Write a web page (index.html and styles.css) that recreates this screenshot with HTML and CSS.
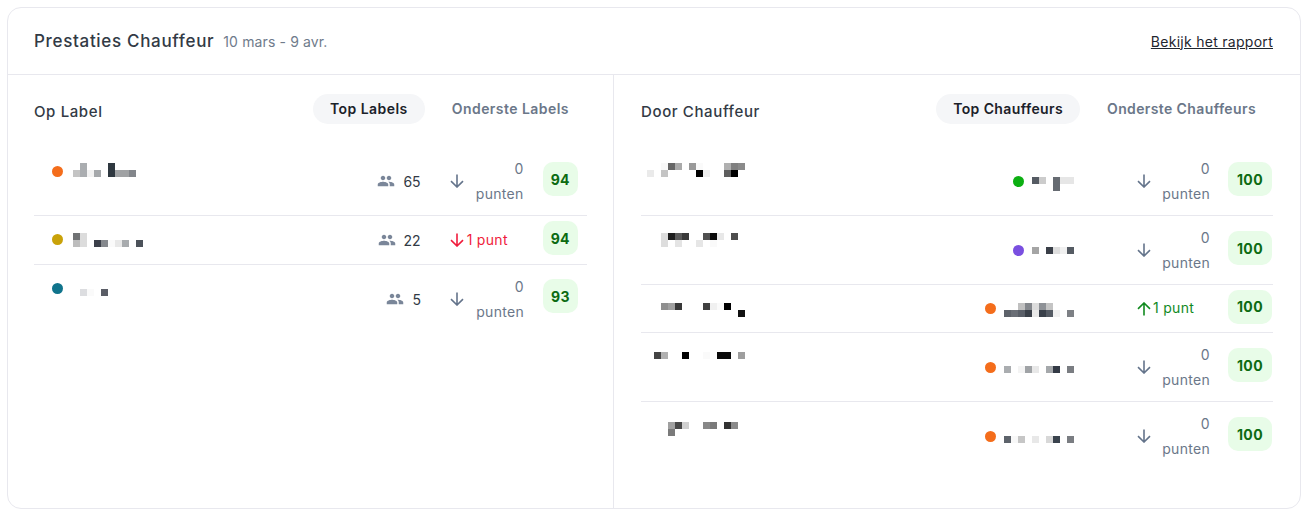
FILE: index.html
```html
<!DOCTYPE html>
<html lang="nl">
<head>
  <meta charset="UTF-8" />
  <meta name="viewport" content="width=device-width, initial-scale=1.0"/>
  <title>Prestaties Chauffeur</title>
  <link rel="stylesheet" href="styles.css">
</head>
<body>

<svg class="sprites" width="0" height="0">
  <symbol id="people" viewBox="0 0 24 24">
    <path d="M16 11c1.66 0 2.99-1.34 2.99-3S17.66 5 16 5c-1.66 0-3 1.34-3 3s1.34 3 3 3zm-8 0c1.66 0 2.99-1.34 2.99-3S9.66 5 8 5C6.34 5 5 6.34 5 8s1.34 3 3 3zm0 2c-2.33 0-7 1.17-7 3.5V19h14v-2.5c0-2.33-4.67-3.5-7-3.5zm8 0c-.29 0-.62.02-.97.05 1.16.84 1.97 1.97 1.97 3.45V19h6v-2.5c0-2.33-4.67-3.5-7-3.5z"/>
  </symbol>
  <symbol id="arrow-down" viewBox="0 0 14 14">
    <path d="M7 .5v12.5M1 7.2 7 13l6-5.8" fill="none" stroke="currentColor" stroke-width="1.6"/>
  </symbol>
  <symbol id="arrow-up" viewBox="0 0 14 14">
    <path d="M7 13.5V1M1 6.8 7 1l6 5.8" fill="none" stroke="currentColor" stroke-width="1.6"/>
  </symbol>
</svg>

<div class="card">
  <div class="card-header">
    <div class="card-title">
      <h1>Prestaties Chauffeur</h1>
      <span class="date-range">10 mars - 9 avr.</span>
    </div>
    <a class="report-link" href="#">Bekijk het rapport</a>
  </div>

  <div class="panels">
    <!-- labels -->
    <section class="panel panel-labels">
      <div class="panel-header">
        <h2>Op Label</h2>
        <div class="tabs">
          <button class="tab tab-active">Top Labels</button>
          <button class="tab">Onderste Labels</button>
        </div>
      </div>

      <div class="row row-tall">
        <span class="dot dot-orange dot-first"></span>
        <svg class="mosaic" width="80" height="68" shape-rendering="crispEdges">
          <rect x="7" y="16" width="7" height="7" fill="#aaadb0"/><rect x="35" y="16" width="7" height="7" fill="#2f3840"/>
          <rect x="0" y="23" width="7" height="7" fill="#c4c4c4"/><rect x="7" y="23" width="7" height="7" fill="#aaadb0"/><rect x="14" y="23" width="7" height="7" fill="#f2f2f2"/><rect x="21" y="23" width="7" height="7" fill="#a5a8ab"/><rect x="35" y="23" width="7" height="7" fill="#2f3840"/><rect x="42" y="23" width="7" height="7" fill="#a0a2a4"/><rect x="49" y="23" width="7" height="7" fill="#a0a2a4"/><rect x="56" y="23" width="7" height="7" fill="#83868b"/>
        </svg>
        <div class="count">
          <svg class="people-icon"><use href="#people"/></svg>
          <span>65</span>
        </div>
        <div class="delta">
          <svg class="arrow"><use href="#arrow-down"/></svg>
          <span class="delta-text">0 punten</span>
        </div>
        <div class="score">94</div>
      </div>

      <div class="row row-short">
        <span class="dot dot-yellow"></span>
        <svg class="mosaic" width="80" height="48" shape-rendering="crispEdges">
          <rect x="0" y="17" width="7" height="7" fill="#707274"/><rect x="7" y="17" width="7" height="7" fill="#dcdcdc"/>
          <rect x="0" y="24" width="7" height="7" fill="#bdbdbd"/><rect x="7" y="24" width="7" height="7" fill="#dcdcdc"/><rect x="21" y="24" width="7" height="7" fill="#3c404a"/><rect x="28" y="24" width="7" height="7" fill="#85888d"/><rect x="35" y="24" width="7" height="7" fill="#fafafa"/><rect x="42" y="24" width="7" height="7" fill="#e8e8e8"/><rect x="49" y="24" width="7" height="7" fill="#a8abae"/><rect x="63" y="24" width="7" height="7" fill="#4c525a"/>
        </svg>
        <div class="count">
          <svg class="people-icon"><use href="#people"/></svg>
          <span>22</span>
        </div>
        <div class="delta delta-down">
          <svg class="arrow"><use href="#arrow-down"/></svg>
          <span class="delta-single">1 punt</span>
        </div>
        <div class="score">94</div>
      </div>

      <div class="row row-tall row-last">
        <span class="dot dot-teal"></span>
        <svg class="mosaic" width="80" height="68" shape-rendering="crispEdges">
          <rect x="7" y="24" width="7" height="7" fill="#dcdde0"/><rect x="14" y="24" width="7" height="7" fill="#fafafa"/><rect x="28" y="24" width="7" height="7" fill="#5a5d66"/>
        </svg>
        <div class="count">
          <svg class="people-icon"><use href="#people"/></svg>
          <span>5</span>
        </div>
        <div class="delta">
          <svg class="arrow"><use href="#arrow-down"/></svg>
          <span class="delta-text">0 punten</span>
        </div>
        <div class="score">93</div>
      </div>
    </section>

    <!-- chauffeurs -->
    <section class="panel panel-drivers">
      <div class="panel-header">
        <h2>Door Chauffeur</h2>
        <div class="tabs">
          <button class="tab tab-active">Top Chauffeurs</button>
          <button class="tab">Onderste Chauffeurs</button>
        </div>
      </div>

      <div class="row row-tall">
        <svg class="mosaic" width="110" height="68" shape-rendering="crispEdges">
          <rect x="20" y="16" width="7" height="7" fill="#f8f8f8"/><rect x="27" y="16" width="7" height="7" fill="#666"/><rect x="34" y="16" width="7" height="7" fill="#aaa"/><rect x="48" y="16" width="7" height="7" fill="#999"/><rect x="55" y="16" width="7" height="7" fill="#fafafa"/><rect x="83" y="16" width="7" height="7" fill="#b0b0b0"/><rect x="90" y="16" width="7" height="7" fill="#808080"/><rect x="97" y="16" width="7" height="7" fill="#8a8a8a"/>
          <rect x="6" y="23" width="7" height="7" fill="#eaeaea"/><rect x="20" y="23" width="7" height="7" fill="#c4c4c4"/><rect x="55" y="23" width="7" height="7" fill="#000"/><rect x="62" y="23" width="7" height="7" fill="#eee"/><rect x="83" y="23" width="7" height="7" fill="#5e5e5e"/><rect x="90" y="23" width="7" height="7" fill="#000"/>
        </svg>
        <div class="driver-label">
          <span class="dot dot-green"></span>
          <svg class="mosaic" width="43" height="68" shape-rendering="crispEdges">
            <rect x="0" y="30" width="7" height="7" fill="#555b63"/><rect x="7" y="30" width="7" height="7" fill="#ccc"/><rect x="21" y="30" width="7" height="7" fill="#666b72"/><rect x="28" y="30" width="7" height="7" fill="#e6e6e6"/><rect x="35" y="30" width="7" height="7" fill="#e6e6e6"/>
            <rect x="21" y="37" width="7" height="7" fill="#666b72"/>
          </svg>
        </div>
        <div class="delta">
          <svg class="arrow"><use href="#arrow-down"/></svg>
          <span class="delta-text">0 punten</span>
        </div>
        <div class="score">100</div>
      </div>

      <div class="row row-tall">
        <svg class="mosaic" width="110" height="68" shape-rendering="crispEdges">
          <rect x="20" y="17" width="7" height="7" fill="#ddd"/><rect x="27" y="17" width="7" height="7" fill="#1e1e1e"/><rect x="34" y="17" width="7" height="7" fill="#5a5a5a"/><rect x="41" y="17" width="7" height="7" fill="#3a3a3a"/><rect x="62" y="17" width="7" height="7" fill="#505050"/><rect x="69" y="17" width="7" height="7" fill="#0a0a0a"/><rect x="76" y="17" width="7" height="7" fill="#e8e8e8"/><rect x="90" y="17" width="7" height="7" fill="#4d4d4d"/>
          <rect x="20" y="24" width="7" height="7" fill="#ddd"/><rect x="34" y="24" width="7" height="7" fill="#e4e4e4"/><rect x="55" y="24" width="7" height="7" fill="#e6e6e6"/><rect x="69" y="24" width="7" height="7" fill="#fafafa"/>
        </svg>
        <div class="driver-label">
          <span class="dot dot-purple"></span>
          <svg class="mosaic" width="43" height="68" shape-rendering="crispEdges">
            <rect x="0" y="31" width="7" height="7" fill="#a5a5a5"/><rect x="14" y="31" width="7" height="7" fill="#3a3f48"/><rect x="21" y="31" width="7" height="7" fill="#dedede"/><rect x="28" y="31" width="7" height="7" fill="#f0f0f0"/><rect x="35" y="31" width="7" height="7" fill="#555b63"/>
          </svg>
        </div>
        <div class="delta">
          <svg class="arrow"><use href="#arrow-down"/></svg>
          <span class="delta-text">0 punten</span>
        </div>
        <div class="score">100</div>
      </div>

      <div class="row row-driver-short">
        <svg class="mosaic" width="110" height="47" shape-rendering="crispEdges">
          <rect x="20" y="18" width="7" height="7" fill="#8f8f8f"/><rect x="27" y="18" width="7" height="7" fill="#a0a0a0"/><rect x="34" y="18" width="7" height="7" fill="#383838"/><rect x="62" y="18" width="7" height="7" fill="#404040"/><rect x="69" y="18" width="7" height="7" fill="#f0f0f0"/><rect x="76" y="18" width="7" height="7" fill="#fafafa"/><rect x="83" y="18" width="7" height="7" fill="#000"/>
          <rect x="97" y="25" width="7" height="7" fill="#111"/>
        </svg>
        <div class="driver-label">
          <span class="dot dot-orange"></span>
          <svg class="mosaic" width="71" height="47" shape-rendering="crispEdges">
            <rect x="14" y="18" width="7" height="7" fill="#c0c0c0"/><rect x="21" y="18" width="7" height="7" fill="#84878c"/><rect x="28" y="18" width="7" height="7" fill="#dcdcdc"/><rect x="35" y="18" width="7" height="7" fill="#8e9196"/><rect x="42" y="18" width="7" height="7" fill="#c4c4c4"/>
            <rect x="0" y="25" width="7" height="7" fill="#5d626a"/><rect x="7" y="25" width="7" height="7" fill="#6a6e76"/><rect x="14" y="25" width="7" height="7" fill="#5a5f68"/><rect x="21" y="25" width="7" height="7" fill="#3a4049"/><rect x="28" y="25" width="7" height="7" fill="#e8e8e8"/><rect x="35" y="25" width="7" height="7" fill="#39404a"/><rect x="42" y="25" width="7" height="7" fill="#555b64"/><rect x="49" y="25" width="7" height="7" fill="#f0f0f0"/><rect x="63" y="25" width="7" height="7" fill="#7d8085"/>
          </svg>
        </div>
        <div class="delta delta-up">
          <svg class="arrow"><use href="#arrow-up"/></svg>
          <span class="delta-single">1 punt</span>
        </div>
        <div class="score">100</div>
      </div>

      <div class="row row-tall">
        <svg class="mosaic" width="110" height="68" shape-rendering="crispEdges">
          <rect x="13" y="19" width="7" height="7" fill="#444"/><rect x="20" y="19" width="7" height="7" fill="#b0b0b0"/><rect x="41" y="19" width="7" height="7" fill="#000"/><rect x="62" y="19" width="7" height="7" fill="#fafafa"/><rect x="76" y="19" width="7" height="7" fill="#0a0a0a"/><rect x="83" y="19" width="7" height="7" fill="#0a0a0a"/><rect x="97" y="19" width="7" height="7" fill="#9e9e9e"/>
        </svg>
        <div class="driver-label">
          <span class="dot dot-orange"></span>
          <svg class="mosaic" width="71" height="68" shape-rendering="crispEdges">
            <rect x="0" y="33" width="7" height="7" fill="#aaadb0"/><rect x="14" y="33" width="7" height="7" fill="#f4f4f4"/><rect x="21" y="33" width="7" height="7" fill="#a0a3a6"/><rect x="28" y="33" width="7" height="7" fill="#e8e8e8"/><rect x="42" y="33" width="7" height="7" fill="#a5a8ab"/><rect x="49" y="33" width="7" height="7" fill="#333a45"/><rect x="63" y="33" width="7" height="7" fill="#7a7d82"/>
          </svg>
        </div>
        <div class="delta">
          <svg class="arrow"><use href="#arrow-down"/></svg>
          <span class="delta-text">0 punten</span>
        </div>
        <div class="score">100</div>
      </div>

      <div class="row row-tall row-last">
        <svg class="mosaic" width="110" height="68" shape-rendering="crispEdges">
          <rect x="27" y="20" width="7" height="7" fill="#a0a0a0"/><rect x="34" y="20" width="7" height="7" fill="#484848"/><rect x="41" y="20" width="7" height="7" fill="#d0d0d0"/><rect x="62" y="20" width="7" height="7" fill="#888"/><rect x="69" y="20" width="7" height="7" fill="#7a7a7a"/><rect x="83" y="20" width="7" height="7" fill="#333"/><rect x="90" y="20" width="7" height="7" fill="#8a8a8a"/>
          <rect x="27" y="27" width="7" height="7" fill="#7a7a7a"/>
        </svg>
        <div class="driver-label">
          <span class="dot dot-orange"></span>
          <svg class="mosaic" width="71" height="68" shape-rendering="crispEdges">
            <rect x="0" y="34" width="7" height="7" fill="#5d636b"/><rect x="7" y="34" width="7" height="7" fill="#f8f8f8"/><rect x="14" y="34" width="7" height="7" fill="#c6c6c6"/><rect x="28" y="34" width="7" height="7" fill="#e8e8e8"/><rect x="42" y="34" width="7" height="7" fill="#d8d8d8"/><rect x="49" y="34" width="7" height="7" fill="#3a434d"/><rect x="63" y="34" width="7" height="7" fill="#7a7d82"/>
          </svg>
        </div>
        <div class="delta">
          <svg class="arrow"><use href="#arrow-down"/></svg>
          <span class="delta-text">0 punten</span>
        </div>
        <div class="score">100</div>
      </div>
    </section>
  </div>
</div>

</body>
</html>
```

FILE: styles.css
```css
* {
  box-sizing: border-box;
}

body {
  margin: 0;
  padding: 7px 5px 7px 7px;
  background-color: #fff;
  font-family: "Inter", "Liberation Sans", sans-serif;
  color: #323a45;
}

.sprites {
  display: block;
  height: 0;
}

.card {
  height: 502px;
  border: 1px solid #e8e8ee;
  border-radius: 14px;
  background-color: #fff;
  display: flex;
  flex-direction: column;
}

.card-header {
  height: 67px;
  padding: 0 27px 0 26px;
  border-bottom: 1px solid #e8e8ee;
  display: flex;
  align-items: center;
  justify-content: space-between;
}

.card-title {
  display: flex;
  align-items: baseline;
  gap: 9px;
}

.card-title h1 {
  margin: 0;
  font-size: 17px;
  font-weight: 500;
  letter-spacing: 0.68px;
  color: #323a45;
}

.date-range {
  font-size: 14px;
  letter-spacing: 0.13px;
  color: #6f7b8b;
}

.report-link {
  font-size: 14px;
  letter-spacing: 0.28px;
  color: #1f2630;
}

.panels {
  flex: 1;
  display: flex;
}

.panel {
  padding-top: 19px;
}

.panel-labels {
  width: 606px;
  padding-left: 26px;
  padding-right: 26px;
  border-right: 1px solid #e8e8ee;
}

.panel-drivers {
  flex: 1;
  padding-left: 27px;
  padding-right: 27px;
}

.panel-header {
  height: 30px;
  margin-bottom: 23px;
  display: flex;
  align-items: center;
  justify-content: space-between;
}

.panel-header h2 {
  margin: 4px 0 0;
  font-size: 15px;
  font-weight: 500;
  letter-spacing: 0.62px;
  color: #323a45;
}

.tabs {
  display: flex;
  gap: 10px;
}

.panel-labels .tabs {
  margin-right: 1px;
}

.tab {
  height: 30px;
  padding: 0 17px 2px;
  border: none;
  border-radius: 15px;
  background: transparent;
  font-family: inherit;
  font-size: 14px;
  font-weight: 600;
  letter-spacing: 0.38px;
  color: #6b7789;
}

.panel-labels .tab {
  letter-spacing: 0.45px;
}

.tab-active {
  background-color: #f5f6f8;
  color: #1b2129;
}

.row {
  display: flex;
  align-items: center;
  border-bottom: 1px solid #e8e8ee;
}

.row-tall {
  height: 69px;
}

.row-short {
  height: 49px;
}

.row-driver-short {
  height: 48px;
}

.row-last {
  height: 68px;
  border-bottom: none;
}

.panel-labels .row {
  padding-right: 9px;
}

.panel-labels .row > .dot {
  align-self: flex-start;
  margin: 18px 10px 0 18px;
}

.panel-labels .row > .dot-first {
  margin-top: 19px;
}

.panel-labels .row > .mosaic {
  margin-right: auto;
}

.panel-drivers .row {
  padding-right: 1px;
}

.panel-drivers .row > .mosaic {
  margin-right: auto;
}

.mosaic {
  display: block;
  align-self: flex-start;
  flex-shrink: 0;
}

.dot {
  display: block;
  width: 11px;
  height: 11px;
  flex-shrink: 0;
  border-radius: 50%;
}

.dot-orange { background-color: #f46d1b; }
.dot-yellow { background-color: #c9a209; }
.dot-teal { background-color: #10748c; }
.dot-green { background-color: #0caf12; }
.dot-purple { background-color: #7a4fe0; }

.driver-label {
  align-self: stretch;
  display: flex;
  align-items: center;
  gap: 8px;
}

.count {
  display: flex;
  align-items: center;
  gap: 8px;
  font-size: 14px;
  color: #323a45;
}

.people-icon {
  width: 18px;
  height: 18px;
  fill: #7a8699;
}

.delta {
  width: 74px;
  margin-left: 29px;
  display: flex;
  align-items: center;
  font-size: 14px;
  line-height: 24.5px;
  letter-spacing: 0.3px;
  color: #6b7789;
}

.panel-drivers .delta {
  width: 73px;
  margin-left: 62px;
}

.arrow {
  width: 14px;
  height: 14px;
  flex-shrink: 0;
  color: #64748b;
}

.delta-text {
  width: min-content;
  margin-left: auto;
  padding-top: 1px;
  text-align: right;
}

.delta-single {
  margin-left: 3px;
  white-space: nowrap;
}

.delta-down,
.delta-down .arrow {
  color: #f01c3c;
}

.delta-up,
.delta-up .arrow {
  color: #118a1f;
}

.delta-up .delta-single {
  margin-left: 2px;
}

.score {
  min-width: 35px;
  height: 34px;
  margin-left: 19px;
  margin-bottom: 4px;
  padding: 0 8px;
  border-radius: 10px;
  background-color: #e8fce8;
  display: flex;
  align-items: center;
  justify-content: center;
  font-size: 14px;
  font-weight: 700;
  letter-spacing: 0.4px;
  color: #0c6b12;
}

.panel-labels .row-last .score {
  margin-bottom: 6px;
}

.panel-drivers .score {
  width: 44px;
  margin-left: 18px;
}
```
